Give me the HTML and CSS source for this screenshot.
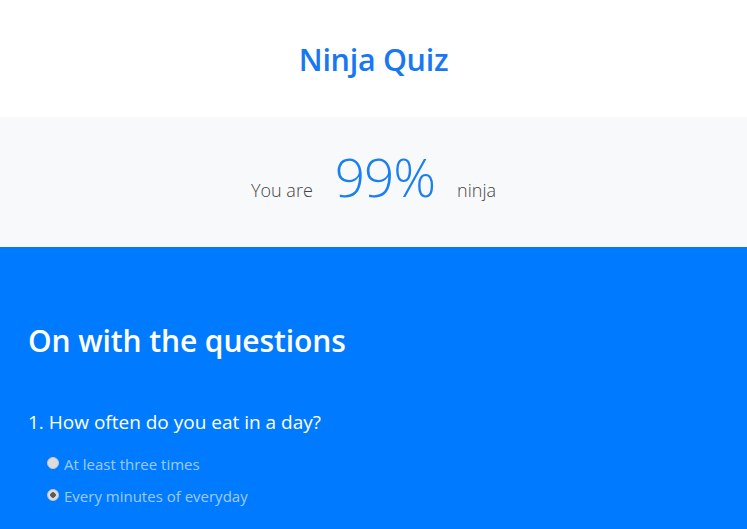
FILE: index.html
```html
<!DOCTYPE html>
<html>
<head>
<meta charset="utf-8">
<link rel="stylesheet" href="styles.css">
</head>
<body>
<header class="top">
  <h1 class="title">Ninja Quiz</h1>
</header>
<section class="result">
  <div class="result-line">
    <span class="lead">You are</span>
    <span class="score">99%</span>
    <span class="lead">ninja</span>
  </div>
</section>
<main class="questions">
  <h2 class="questions-title">On with the questions</h2>
  <div class="question">
    <p class="question-text">1. How often do you eat in a day?</p>
    <label class="option"><input class="radio" type="radio" name="q1" disabled> At least three times</label>
    <label class="option"><input class="radio" type="radio" name="q1" checked disabled> Every minutes of everyday</label>
  </div>
</main>
</body>
</html>
```
FILE: styles.css
```css
html, body {
  margin: 0;
  padding: 0;
  font-family: "Open Sans", "Noto Sans", sans-serif;
  height: 100%;
}
body {
  background: #007bff;
}
.top {
  background: #fff;
  padding: 40px 0 39px;
  text-align: center;
}
.title {
  margin: 0;
  font-size: 30.5px;
  line-height: 38px;
  font-weight: 600;
  color: #1877f2;
  letter-spacing: -0.3px;
}
.result {
  background: #f8f9fa;
  height: 130px;
  display: flex;
  align-items: center;
  justify-content: center;
}
.result-line {
  display: flex;
  align-items: baseline;
  gap: 22px;
  padding-bottom: 10px;
}
.lead {
  font-size: 18px;
  font-weight: 300;
  color: #444;
}
.score {
  font-size: 53px;
  font-weight: 300;
  line-height: 1.2;
  color: #1a7ff0;
  letter-spacing: -1px;
}
.questions {
  background: #007bff;
  padding: 74px 28px 20px;
  color: #fff;
}
.questions-title {
  margin: 0 0 47px;
  font-size: 30px;
  line-height: 40px;
  font-weight: 600;
  letter-spacing: -0.1px;
}
.question-text {
  margin: 0 0 12px;
  font-size: 19px;
  line-height: 28px;
}
.option {
  display: flex;
  align-items: center;
  gap: 5px;
  margin-left: 19px;
  height: 32px;
  font-size: 15px;
  color: rgba(255,255,255,0.62);
}
.radio {
  appearance: none;
  -webkit-appearance: none;
  margin: 0 0 2px;
  width: 12px;
  height: 12px;
  border-radius: 50%;
  background: #dcdcdc;
  border: 1px solid #c8c8c8;
  box-sizing: border-box;
}
.radio:checked {
  background: radial-gradient(circle, #5a5a5a 0 2.5px, #dcdcdc 3px);
}
```
